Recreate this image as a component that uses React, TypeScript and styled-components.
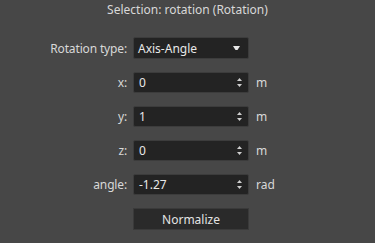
import React from "react";
import styled, { createGlobalStyle } from "styled-components";

const GlobalStyle = createGlobalStyle`
  html, body {
    margin: 0;
    padding: 0;
    background: #474747;
  }
  body {
    font-family: "Noto Sans", "DejaVu Sans", sans-serif;
    font-size: 12px;
    color: #dcdcdc;
  }
`;

interface Row {
  label: string;
  value: string;
  unit: string;
}

const rows: Row[] = [
  { label: "x:", value: "0", unit: "m" },
  { label: "y:", value: "1", unit: "m" },
  { label: "z:", value: "0", unit: "m" },
  { label: "angle:", value: "-1.27", unit: "rad" },
];

const SpinArrows: React.FC = () => (
  <svg width="7" height="11" viewBox="0 0 7 11">
    <path d="M3.5 1 L6 4 L1 4 Z" fill="#cfcfcf" />
    <path d="M3.5 10 L6 7 L1 7 Z" fill="#cfcfcf" />
  </svg>
);

const App: React.FC = () => {
  return (
    <>
      <GlobalStyle />
      <Page>
        <Title>Selection: rotation (Rotation)</Title>
        <Form>
          <Label>Rotation type:</Label>
          <Select>
            <span>Axis-Angle</span>
            <svg width="7" height="4" viewBox="0 0 7 4">
              <path d="M0 0 L7 0 L4.5 4 L2.5 4 Z" fill="#e8e8e8" />
            </svg>
          </Select>
          <span />
          {rows.map((r) => (
            <React.Fragment key={r.label}>
              <Label>{r.label}</Label>
              <SpinBox>
                <span>{r.value}</span>
                <SpinArrows />
              </SpinBox>
              <Unit>{r.unit}</Unit>
            </React.Fragment>
          ))}
          <span />
          <Button>Normalize</Button>
          <span />
        </Form>
      </Page>
    </>
  );
};

const Page = styled.div`
  width: 375px;
  height: 243px;
  box-sizing: border-box;
  display: flex;
  flex-direction: column;
  overflow: hidden;
`;

const Title = styled.div`
  height: 20px;
  line-height: 20px;
  text-align: center;
  color: #d8d8d8;
`;

const Form = styled.div`
  margin-top: 17px;
  display: grid;
  grid-template-columns: 127px 116px auto;
  column-gap: 6px;
  row-gap: 13px;
  align-items: center;
`;

const Label = styled.div`
  text-align: right;
  color: #d8d8d8;
  letter-spacing: -0.15px;
`;

const Field = styled.div`
  box-sizing: border-box;
  display: flex;
  align-items: center;
  justify-content: space-between;
  background: #232323;
  border: 1px solid #3c3c3c;
  border-radius: 2px;
  color: #e8e8e8;
`;

const Select = styled(Field)`
  height: 22px;
  padding: 0 8px 0 4px;
`;

const SpinBox = styled(Field)`
  height: 21px;
  padding: 0 5px 0 5px;
`;

const Unit = styled.div`
  padding-left: 1px;
  color: #d8d8d8;
`;

const Button = styled.div`
  box-sizing: border-box;
  height: 22px;
  display: flex;
  align-items: center;
  justify-content: center;
  background: #2a2a2a;
  border: 1px solid #3a3a3a;
  color: #e4e4e4;
`;

export default App;
